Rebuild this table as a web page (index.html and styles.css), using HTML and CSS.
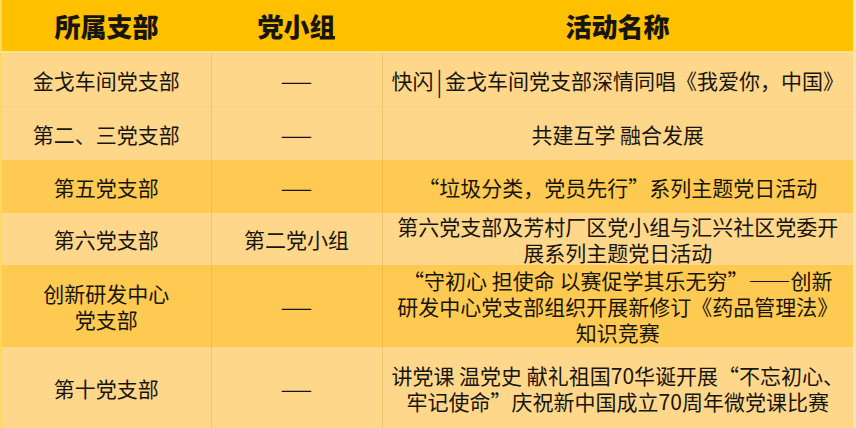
FILE: index.html
```html
<!DOCTYPE html>
<html lang="zh-CN">
<head>
<meta charset="utf-8">
<title>活动表</title>
<link rel="stylesheet" href="styles.css">
</head>
<body>
<div class="page">
<table class="tbl">
  <colgroup>
    <col class="c1"><col class="c2"><col class="c3">
  </colgroup>
  <thead>
    <tr class="head">
      <th>所属支部</th><th>党小组</th><th>活动名称</th>
    </tr>
  </thead>
  <tbody>
    <tr class="light r1">
      <td>金戈车间党支部</td><td><span class="dash">—</span></td><td class="nowrap">快闪<span class="bar">|</span>金戈车间党支部深情同唱《我爱你，中国》</td>
    </tr>
    <tr class="light r2">
      <td>第二、三党支部</td><td><span class="dash">—</span></td><td>共建互学 融合发展</td>
    </tr>
    <tr class="dark r3">
      <td>第五党支部</td><td><span class="dash">—</span></td><td>“垃圾分类，党员先行”系列主题党日活动</td>
    </tr>
    <tr class="light r4">
      <td>第六党支部</td><td>第二党小组</td><td>第六党支部及芳村厂区党小组与汇兴社区党委开<br>展系列主题党日活动</td>
    </tr>
    <tr class="dark r5">
      <td>创新研发中心<br>党支部</td><td><span class="dash">—</span></td><td>“守初心 担使命 以赛促学其乐无穷”——创新<br>研发中心党支部组织开展新修订《药品管理法》<br>知识竞赛</td>
    </tr>
    <tr class="light r6">
      <td>第十党支部</td><td><span class="dash">—</span></td><td>讲党课 温党史 献礼祖国70华诞开展“不忘初心、<br>牢记使命”庆祝新中国成立70周年微党课比赛</td>
    </tr>
  </tbody>
</table>
</div>
</body>
</html>
```
FILE: styles.css
```css
html, body {
  margin: 0;
  padding: 0;
  background: #ffe6a6;
}
.page {
  width: 856px;
  height: 428px;
  overflow: hidden;
  background: #ffe6a6;
}
.tbl {
  width: 854px;
  border-collapse: collapse;
  table-layout: fixed;
  font-family: "Noto Sans CJK SC", "Noto Sans", sans-serif;
  color: #17150f;
  border-left: 2px solid #ffd85e;
  border-right: 1px solid #ffe9a0;
}
.c1 { width: 210px; }
.c2 { width: 171px; }
.c3 { width: auto; }
th, td {
  padding: 0 4px;
  text-align: center;
  vertical-align: middle;
  line-height: 26px;
}
th {
  font-size: 26px;
  font-weight: 900;
  background: #ffc000;
  height: 51px;
  border-bottom: 2px solid #ffe38c;
}
td {
  font-size: 21px;
  font-weight: 400;
  border-left: 1px solid rgba(214, 160, 50, 0.35);
}
td:first-child { border-left: none; }
.light td { background: #ffd78b; }
.dark td { background: #ffca51; }
.r1 td { height: 53px; border-bottom: 1px solid #fccf7c; }
.r2 td { height: 53px; }
.r3 td { height: 53px; }
.r4 td { height: 52px; }
.r5 td { height: 82px; }
.r6 td { height: 81px; }
.nowrap { white-space: nowrap; }
.dash {
  display: inline-block;
  transform: scaleX(1.75);
}
.bar {
  display: inline-block;
  margin: 0 3px;
  transform: scaleY(1.2);
}
```
